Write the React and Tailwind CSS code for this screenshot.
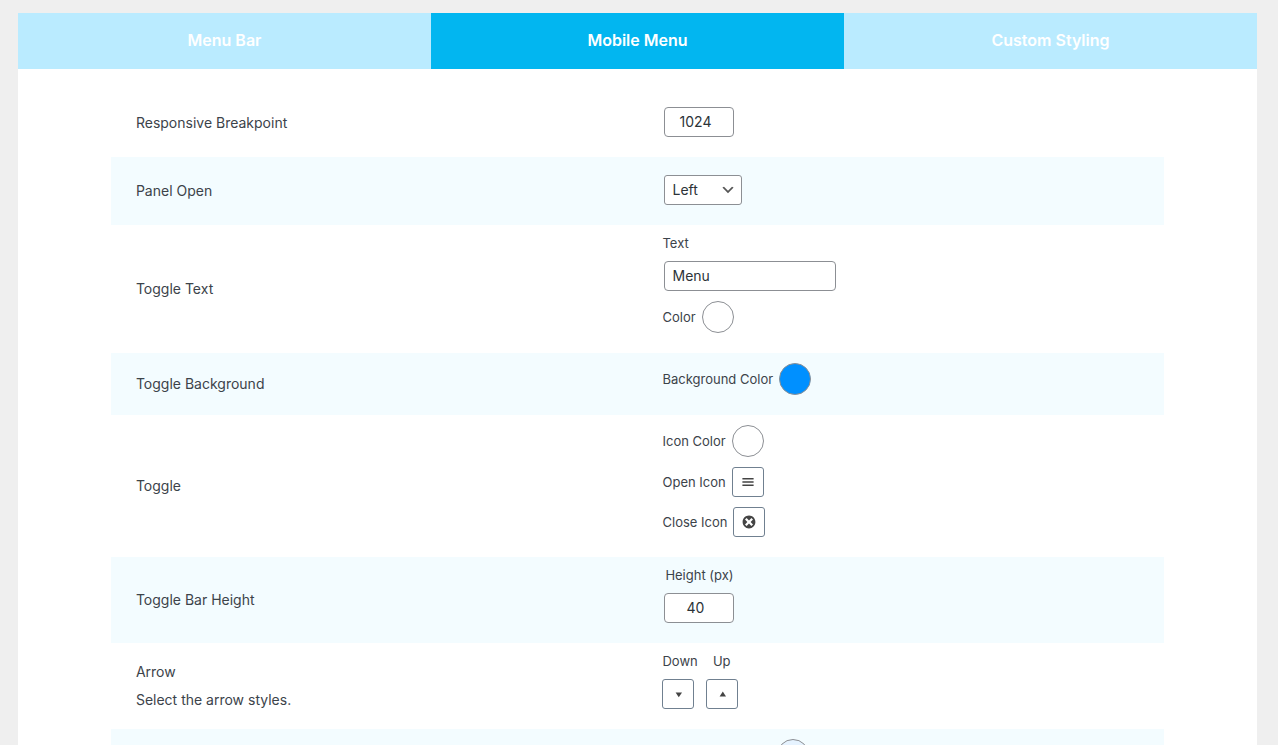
import { useState } from "react";

const TABS = ["Menu Bar", "Mobile Menu", "Custom Styling"];

const ICONS = {
    menu: "M17 7V5H3v2h14zm0 4V9H3v2h14zm0 4v-2H3v2h14z",
    dismiss: "M10 2c4.42 0 8 3.58 8 8s-3.58 8-8 8-8-3.58-8-8 3.58-8 8-8zm5 11l-3-3 3-3-2-2-3 3-3-3-2 2 3 3-3 3 2 2 3-3 3 3z",
    arrowDown: "M15 8l-4.03 6L7 8h8z",
    arrowUp: "M7 13l4.03-6L15 13H7z",
    chevron: "M5 6l5 5 5-5 2 1-7 7-7-7 2-1z"
};

const Icon = ({ name, className = "" }) => (
    <svg viewBox="0 0 20 20" className={`size-4 fill-current ${className}`} aria-hidden="true">
        <path d={ICONS[name]} />
    </svg>
);

const Row = ({ title, htmlFor, description, tinted, children }) => (
    <div className={`flex ${tinted ? "bg-[#f3fcff]" : ""}`}>
        <div className="flex w-1/2 flex-col justify-center px-[25px] text-sm leading-7">
            {htmlFor ? <label htmlFor={htmlFor}>{title}</label> : <p>{title}</p>}
            {description && <p>{description}</p>}
        </div>
        <div className="flex w-1/2 flex-col items-start gap-2.5 px-[25px] pt-2.5 pb-5">{children}</div>
    </div>
);

const Swatch = ({ id, color, ...props }) => (
    <button id={id} type="button" className={`size-8 rounded-full border border-[#8c8f94] ${color}`} {...props} />
);

const ColorField = ({ id, label, color }) => (
    <div className="flex items-center gap-1.5">
        <label htmlFor={id} className="text-[13px] leading-4">{label}</label>
        <Swatch id={id} color={color} />
    </div>
);

const IconButton = ({ id, icon }) => (
    <button id={id} type="button" className="flex h-[30px] w-8 items-center justify-center rounded-[3px] border border-[#708090] bg-white text-[#444]">
        <Icon name={icon} />
    </button>
);

const IconField = ({ id, label, icon }) => (
    <div className="flex items-center gap-1.5">
        <label htmlFor={id} className="text-[13px] leading-4">{label}</label>
        <IconButton id={id} icon={icon} />
    </div>
);

const NumberInput = ({ id, value }) => (
    <input
        id={id}
        type="number"
        defaultValue={value}
        className="h-[30px] w-[70px] appearance-none rounded-[4px] border border-[#8c8f94] bg-white pr-2 pb-0.5 text-center text-sm text-[#2c3338] [-moz-appearance:textfield] [&::-webkit-inner-spin-button]:appearance-none"
    />
);

const App = () => {
    const [activeTab, setActiveTab] = useState("Mobile Menu");

    return (
        <div className="h-screen overflow-hidden bg-[#efefef] pt-[13px] pr-[21px] pl-[18px] text-[#3c434a]" style={{ fontFamily: 'Inter, "Liberation Sans", sans-serif' }}>
            <main className="bg-white">
                {/* Tabs */}
                <nav className="flex">
                    {TABS.map((tab) => (
                        <button
                            key={tab}
                            type="button"
                            onClick={() => setActiveTab(tab)}
                            className={`h-14 flex-1 pb-0.5 text-base font-semibold text-white ${tab === activeTab ? "bg-[#02b6f0]" : "bg-[#baebff]"}`}
                        >
                            {tab}
                        </button>
                    ))}
                </nav>

                {/* Settings */}
                <form className="mx-auto w-[85%] py-5">
                    <Row title="Responsive Breakpoint" htmlFor="breakpoint">
                        <div className="pt-2 pl-0.5">
                            <NumberInput id="breakpoint" value={1024} />
                        </div>
                    </Row>

                    <Row title="Panel Open" htmlFor="panel-open" tinted>
                        <div className="pt-2 pl-0.5">
                            <div className="relative">
                                <select id="panel-open" defaultValue="Left" className="block h-[30px] w-[78px] appearance-none rounded-[3px] border border-[#8c8f94] bg-white pr-6 pl-[7px] text-sm text-[#2c3338]">
                                    <option>Left</option>
                                    <option>Right</option>
                                </select>
                                <Icon name="chevron" className="pointer-events-none absolute top-[7px] right-[6px] text-[#555]" />
                            </div>
                        </div>
                    </Row>

                    <Row title="Toggle Text">
                        <label htmlFor="toggle-text" className="text-[13px] leading-4">Text</label>
                        <div className="pl-0.5">
                            <input id="toggle-text" type="text" defaultValue="Menu" className="block h-[30px] w-[172px] rounded-[4px] border border-[#8c8f94] bg-white px-[7px] pb-0.5 text-sm text-[#2c3338]" />
                        </div>
                        <ColorField id="toggle-color" label="Color" color="bg-white" />
                    </Row>

                    <Row title="Toggle Background" tinted>
                        <ColorField id="toggle-background" label="Background Color" color="bg-[#0090ff]" />
                    </Row>

                    <Row title="Toggle">
                        <ColorField id="icon-color" label="Icon Color" color="bg-white" />
                        <IconField id="open-icon" label="Open Icon" icon="menu" />
                        <IconField id="close-icon" label="Close Icon" icon="dismiss" />
                    </Row>

                    <Row title="Toggle Bar Height" tinted>
                        <div className="flex flex-col items-center gap-2.5 pl-0.5">
                            <label htmlFor="bar-height" className="text-[13px] leading-4">Height (px)</label>
                            <NumberInput id="bar-height" value={40} />
                        </div>
                    </Row>

                    <Row title="Arrow" description="Select the arrow styles.">
                        <div className="flex gap-2">
                            <div className="flex flex-col items-start gap-2.5">
                                <label htmlFor="arrow-down" className="text-[13px] leading-4">Down</label>
                                <IconButton id="arrow-down" icon="arrowDown" />
                            </div>
                            <div className="flex flex-col items-center gap-2.5">
                                <label htmlFor="arrow-up" className="text-[13px] leading-4">Up</label>
                                <IconButton id="arrow-up" icon="arrowUp" />
                            </div>
                        </div>
                    </Row>

                    <Row tinted>
                        <div className="pl-[115px]">
                            <Swatch id="panel-background" color="bg-[#e6f3ff]" aria-label="Panel background color" />
                        </div>
                    </Row>
                </form>
            </main>
        </div>
    );
};

export default App;
